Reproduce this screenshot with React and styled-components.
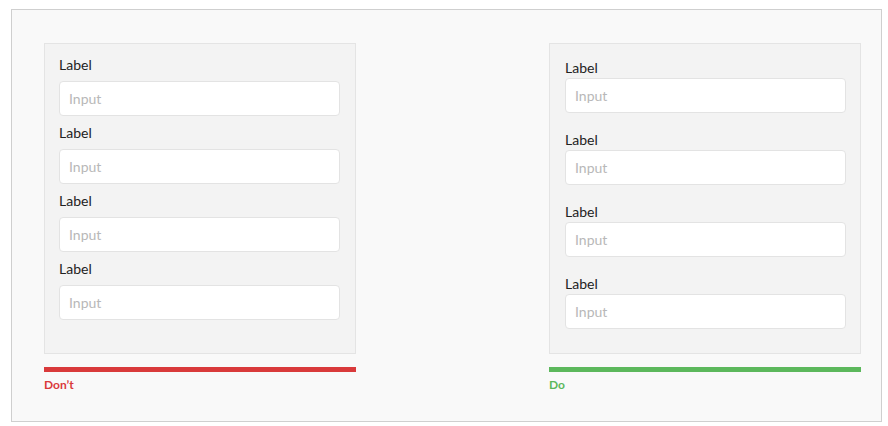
import React from "react";
import styled, { createGlobalStyle } from "styled-components";

const GlobalStyle = createGlobalStyle`
  body {
    margin: 0;
    background: #ffffff;
    font-family: Lato, "Open Sans", sans-serif;
  }
`

const Frame = styled.div`
  box-sizing: border-box;
  margin: 9px 0 0 11px;
  width: 871px;
  height: 413px;
  border: 1px solid #cfcfcf;
  background: #f9f9f9;
  display: grid;
  grid-template-columns: 312px 312px;
  justify-content: space-between;
  padding: 33px 20px 0 32px;
`

const Column = styled.div`
  display: flex;
  flex-direction: column;
`

const Panel = styled.div`
  box-sizing: border-box;
  height: 311px;
  background: #f3f3f3;
  border: 1px solid #e4e4e4;
  display: flex;
  flex-direction: column;
  padding: ${p => p.$good ? "15px 15px 0 15px" : "12px 15px 0 14px"};
`

const Field = styled.div`
  display: flex;
  flex-direction: column;
  margin-bottom: ${p => p.$good ? "18px" : "8px"};
`

const Label = styled.label`
  font-size: 14px;
  line-height: 18px;
  color: #222222;
  margin-bottom: ${p => p.$good ? "1px" : "7px"};
`

const Input = styled.input`
  box-sizing: border-box;
  width: 281px;
  height: 35px;
  border: 1px solid #e3e3e3;
  border-radius: 4px;
  background: #ffffff;
  padding: 0 9px;
  font-family: Lato, "Open Sans", sans-serif;
  font-size: 14px;
  outline: none;
  &::placeholder {
    color: #b8b8b8;
  }
`

const Bar = styled.div`
  height: 5px;
  margin-top: 13px;
  background: ${p => p.$color};
`

const Verdict = styled.div`
  margin-top: 5px;
  font-size: 12px;
  line-height: 16px;
  font-weight: 700;
  color: ${p => p.$color};
`

const labels = ["Label", "Label", "Label", "Label"];

const Example = ({ good, color, caption }) => (
  <Column>
    <Panel $good={good}>
      {labels.map((l, i) => (
        <Field key={i} $good={good}>
          <Label $good={good}>{l}</Label>
          <Input placeholder="Input" />
        </Field>
      ))}
    </Panel>
    <Bar $color={color} />
    <Verdict $color={color}>{caption}</Verdict>
  </Column>
)

export default function App() {
  return (
    <>
      <GlobalStyle />
      <Frame>
        <Example good={false} color="#d93a3b" caption="Don’t" />
        <Example good={true} color="#5cb85c" caption="Do" />
      </Frame>
    </>
  )
}
